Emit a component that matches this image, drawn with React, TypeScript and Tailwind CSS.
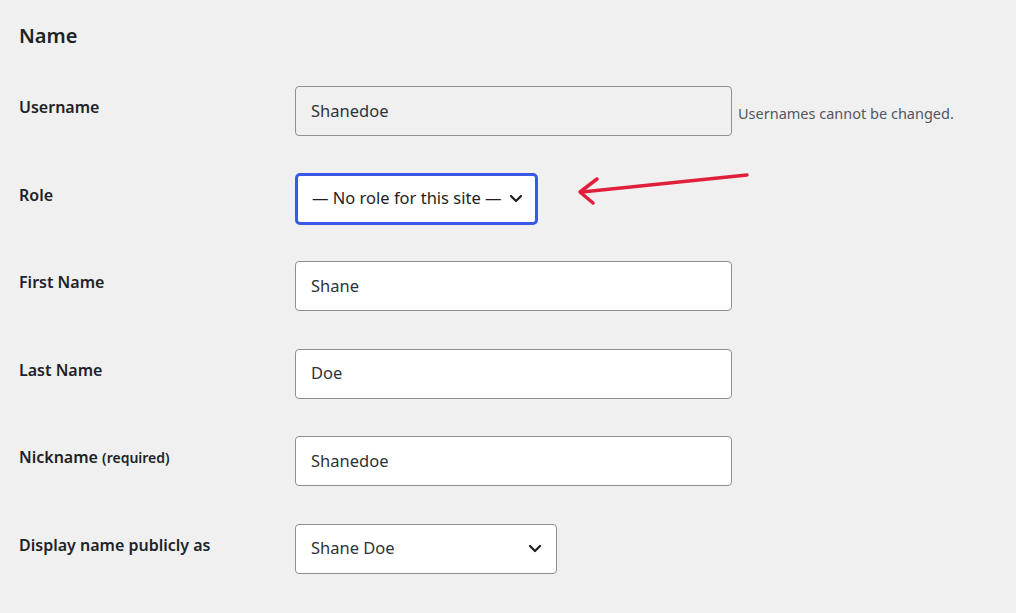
const FONT = { fontFamily: '"Segoe UI", "Noto Sans", "Open Sans", sans-serif' };

function Chevron() {
  return (
    <svg width="14" height="9" viewBox="0 0 14 9" fill="none" stroke="#1e1e1e" strokeWidth="2.2" strokeLinecap="round" strokeLinejoin="round">
      <path d="M2 2l5 5 5-5" />
    </svg>
  );
}

function Row({ label, children }: { label: React.ReactNode; children: React.ReactNode }) {
  return (
    <div className="flex">
      <div className="w-[276px] pt-[9px] text-[16px] font-semibold text-[#1d2327]">{label}</div>
      <div className="flex items-start">{children}</div>
    </div>
  );
}

export default function App() {
  return (
    <div className="relative h-[613px] w-[1016px] overflow-hidden bg-[#f0f0f1] pl-[19px] pt-[21px]" style={FONT}>
      <h2 className="text-[20px] font-semibold text-[#1d2327]">Name</h2>
      <div className="mt-[35px] flex flex-col gap-y-[37.5px]">
        <Row label="Username">
          <div className="flex h-[50px] w-[437px] items-center rounded-[4px] border border-[#8c8f94] bg-[#f0f0f1] px-[15px] text-[16.5px] text-[#2c3338]">Shanedoe</div>
          <span className="ml-[6px] mt-[17px] text-[14.5px] text-[#50575e]">Usernames cannot be changed.</span>
        </Row>
        <Row label="Role">
          <div className="-my-[1px] flex h-[52px] w-[243px] items-center justify-between rounded-[5px] border-[3px] border-[#3858e9] bg-white pl-[14px] pr-[12px] text-[16.5px] text-[#1e1e1e]">
            <span>— No role for this site —</span>
            <Chevron />
          </div>
        </Row>
        <Row label="First Name">
          <div className="flex h-[50px] w-[437px] items-center rounded-[4px] border border-[#8c8f94] bg-white px-[15px] text-[16.5px] text-[#2c3338]">Shane</div>
        </Row>
        <Row label="Last Name">
          <div className="flex h-[50px] w-[437px] items-center rounded-[4px] border border-[#8c8f94] bg-white px-[15px] text-[16.5px] text-[#2c3338]">Doe</div>
        </Row>
        <Row label={<>Nickname <span className="text-[14px]">(required)</span></>}>
          <div className="flex h-[50px] w-[437px] items-center rounded-[4px] border border-[#8c8f94] bg-white px-[15px] text-[16.5px] text-[#2c3338]">Shanedoe</div>
        </Row>
        <Row label="Display name publicly as">
          <div className="flex h-[50px] w-[262px] items-center justify-between rounded-[4px] border border-[#8c8f94] bg-white pl-[15px] pr-[14px] text-[16.5px] text-[#2c3338]">
            <span>Shane Doe</span>
            <Chevron />
          </div>
        </Row>
      </div>
      <svg className="absolute left-[570px] top-[165px]" width="190" height="50" viewBox="0 0 190 50" fill="none" stroke="#e0203a" strokeWidth="3.5" strokeLinecap="round" strokeLinejoin="round">
        <path d="M177 10L12 27" />
        <path d="M27 14L10 27l13 11" />
      </svg>
    </div>
  );
}
